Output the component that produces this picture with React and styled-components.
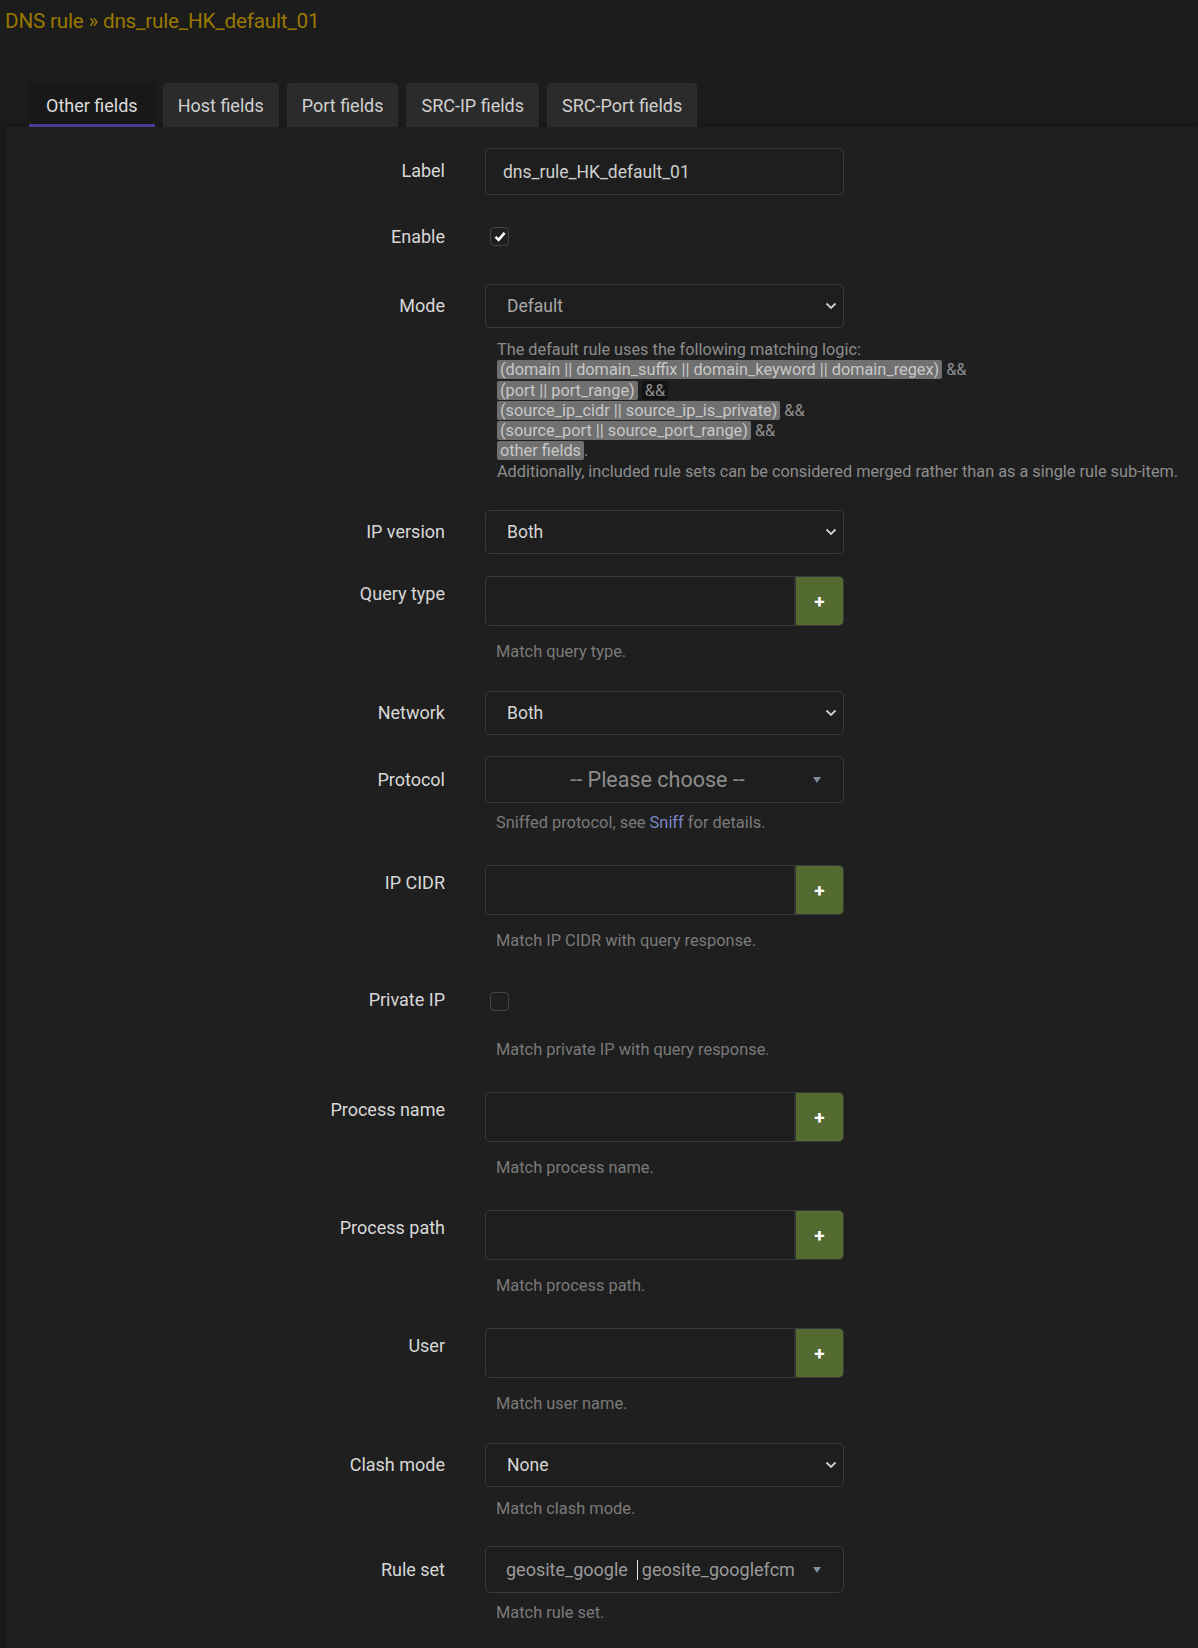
import React from 'react';
import styled, { createGlobalStyle } from 'styled-components';

const GlobalStyle = createGlobalStyle`
  html, body {
    margin: 0;
    background: #1c1c1c;
  }
  body {
    font-family: Roboto, "Noto Sans", "Liberation Sans", sans-serif;
    color: #cfcfcf;
  }
`;

const Page = styled.div`
  min-height: 1648px;
  overflow: hidden;
`;

const Title = styled.h2`
  margin: 0 0 49px;
  padding: 8px 0 0 5px;
  font-size: 20.7px;
  line-height: 26px;
  font-weight: 400;
  color: #9a7800;
  letter-spacing: -0.2px;
`;

const TabList = styled.ul`
  display: flex;
  gap: 8px;
  margin: 0 0 0 29px;
  padding: 0;
  list-style: none;
`;

const Tab = styled.li`
  height: 44px;
  box-sizing: border-box;
  padding: 3px ${(p) => (p.$active ? 17 : 15)}px 0;
  display: flex;
  align-items: center;
  font-size: 18px;
  color: ${(p) => (p.$active ? '#dcdcdc' : '#d0d0d0')};
  background: ${(p) => (p.$active ? '#181818' : '#2b2b2b')};
  border-radius: 4px 4px 0 0;
  border-bottom: 3px solid ${(p) => (p.$active ? '#4b3c92' : 'transparent')};
`;

const Panel = styled.div`
  margin-left: 5px;
  padding: 10px 0 40px;
  background: #1f1f1f;
  border-left: 1px solid #181818;
  box-shadow: 0 -3px 5px rgba(0, 0, 0, 0.18);
`;

const Row = styled.div`
  display: grid;
  grid-template-columns: 439px 1fr;
  column-gap: 40px;
  padding: ${(p) => p.$top ?? 11}px 0 11px;
`;

const Label = styled.div`
  text-align: right;
  font-size: 18px;
  line-height: ${(p) => p.$lh || 46}px;
  color: #d8d8d8;
`;

const Field = styled.div`
  display: flex;
  flex-direction: column;
  align-items: flex-start;
`;

const TextInput = styled.div`
  width: 359px;
  height: 47px;
  box-sizing: border-box;
  display: flex;
  align-items: center;
  padding: 0 17px;
  border: 1px solid #3a3a3a;
  border-radius: 5px;
  background: #1e1e1e;
  font-size: 17.5px;
  color: #cfcfcf;
`;

const Select = styled.div`
  width: 359px;
  height: 44px;
  box-sizing: border-box;
  display: flex;
  align-items: center;
  justify-content: space-between;
  padding: 0 6px 0 21px;
  border: 1px solid #3a3a3a;
  border-radius: 5px;
  background: #1e1e1e;
  font-size: 17.5px;
  color: ${(p) => (p.$dim ? '#a8a8a8' : '#d6d6d6')};
`;

const Chevron = () => (
  <svg width="12" height="8" viewBox="0 0 12 8">
    <path d="M1.5 1.5l4.5 4.5 4.5-4.5" fill="none" stroke="#d0d0d0" strokeWidth="1.8" />
  </svg>
);

const Combo = styled.div`
  width: 359px;
  height: 47px;
  box-sizing: border-box;
  display: flex;
  align-items: center;
  padding: 0 22px 0 20px;
  border: 1px solid #3a3a3a;
  border-radius: 5px;
  background: #1e1e1e;
  font-size: 18px;
  color: #9a9a9a;
`;

const Placeholder = styled.span`
  flex: 1;
  text-align: center;
  font-size: 21.5px;
  color: #8c8c8c;
  padding-right: 4px;
`;

const ComboItems = styled.span`
  flex: 1;
  display: flex;
  align-items: center;
  white-space: nowrap;
`;

const Caret = styled.span`
  flex: none;
  width: 0;
  height: 0;
  border-left: 4px solid transparent;
  border-right: 4px solid transparent;
  border-top: 6px solid #7d8ca0;
`;

const Cursor = styled.span`
  width: 1px;
  height: 20px;
  background: #e8e8e8;
  margin: 0 4px 0 9px;
`;

const DynList = styled.div`
  width: 359px;
  height: 50px;
  box-sizing: border-box;
  display: flex;
  border: 1px solid #3a3a3a;
  border-radius: 5px;
  overflow: hidden;
  background: #1e1e1e;
  margin-bottom: 6px;
`;

const Entry = styled.div`
  flex: 1;
`;

const AddButton = styled.div`
  width: 47px;
  display: flex;
  align-items: center;
  justify-content: center;
  background: #536a31;
  border-left: 2px solid #333;
  color: #fff;
  font-size: 19px;
  font-weight: 700;
`;

const CheckWrap = styled.div`
  height: ${(p) => p.$h || 45}px;
  display: flex;
  align-items: flex-start;
  box-sizing: border-box;
  padding: ${(p) => p.$pt || 12}px 0 0 5px;
`;

const CheckBox = styled.span`
  width: 19px;
  height: 19px;
  box-sizing: border-box;
  border: 1px solid #444;
  border-radius: 4px;
  display: flex;
  align-items: center;
  justify-content: center;
`;

const Help = styled.div`
  margin: ${(p) => p.$mt || 10}px 0 10px 11px;
  font-size: 16.4px;
  line-height: 20px;
  color: #7a7a7a;
  white-space: nowrap;
`;

const Link = styled.span`
  color: #7b86c4;
`;

const Desc = styled.div`
  margin: 12px 0 6px 12px;
  font-size: 16.3px;
  line-height: 20.3px;
  color: #8d8d8d;
  white-space: nowrap;
`;

const Code = styled.span`
  background: ${(p) => (p.$dark ? '#141414' : '#707070')};
  color: ${(p) => (p.$dark ? '#8d8d8d' : '#c8c8c8')};
  border-radius: 2px;
  padding: 0 3px;
`;

const Check = () => (
  <svg width="12" height="11" viewBox="0 0 12 11">
    <path d="M1.5 5.8l3.1 3.1 6-7" fill="none" stroke="#fff" strokeWidth="2.6" />
  </svg>
);

const DynRow = ({ label, help }) => (
  <Row>
    <Label $lh={36}>{label}</Label>
    <Field>
      <DynList>
        <Entry />
        <AddButton>+</AddButton>
      </DynList>
      <Help>{help}</Help>
    </Field>
  </Row>
);

const SelectRow = ({ label, value, help, top }) => (
  <Row $top={top}>
    <Label $lh={44}>{label}</Label>
    <Field>
      <Select>
        {value}
        <Chevron />
      </Select>
      {help && <Help $mt={12}>{help}</Help>}
    </Field>
  </Row>
);

export default function App() {
  return (
    <Page>
      <GlobalStyle />
      <Title>DNS rule » dns_rule_HK_default_01</Title>
      <TabList>
        <Tab $active>Other fields</Tab>
        <Tab>Host fields</Tab>
        <Tab>Port fields</Tab>
        <Tab>SRC-IP fields</Tab>
        <Tab>SRC-Port fields</Tab>
      </TabList>
      <Panel>
        <Row>
          <Label>Label</Label>
          <Field>
            <TextInput>dns_rule_HK_default_01</TextInput>
          </Field>
        </Row>
        <Row>
          <Label $lh={40}>Enable</Label>
          <Field>
            <CheckWrap $pt={10}>
              <CheckBox>
                <Check />
              </CheckBox>
            </CheckWrap>
          </Field>
        </Row>
        <Row>
          <Label $lh={44}>Mode</Label>
          <Field>
            <Select $dim>
              Default
              <Chevron />
            </Select>
            <Desc>
              The default rule uses the following matching logic:
              <br />
              <Code>(domain || domain_suffix || domain_keyword || domain_regex)</Code> &amp;&amp;
              <br />
              <Code>(port || port_range)</Code> <Code $dark>&amp;&amp;</Code>
              <br />
              <Code>(source_ip_cidr || source_ip_is_private)</Code> &amp;&amp;
              <br />
              <Code>(source_port || source_port_range)</Code> &amp;&amp;
              <br />
              <Code>other fields</Code>.
              <br />
              Additionally, included rule sets can be considered merged rather than as a single rule sub-item.
            </Desc>
          </Field>
        </Row>
        <SelectRow label="IP version" value="Both" />
        <DynRow label="Query type" help="Match query type." />
        <SelectRow label="Network" value="Both" top={8} />
        <Row $top={10}>
          <Label $lh={47}>Protocol</Label>
          <Field>
            <Combo>
              <Placeholder>-- Please choose --</Placeholder>
              <Caret />
            </Combo>
            <Help>
              Sniffed protocol, see <Link>Sniff</Link> for details.
            </Help>
          </Field>
        </Row>
        <DynRow label="IP CIDR" help="Match IP CIDR with query response." />
        <Row $top={8}>
          <Label $lh={40}>Private IP</Label>
          <Field>
            <CheckWrap $h={50}>
              <CheckBox />
            </CheckWrap>
            <Help>Match private IP with query response.</Help>
          </Field>
        </Row>
        <DynRow label="Process name" help="Match process name." />
        <DynRow label="Process path" help="Match process path." />
        <DynRow label="User" help="Match user name." />
        <SelectRow label="Clash mode" value="None" help="Match clash mode." top={8} />
        <Row $top={6}>
          <Label $lh={47}>Rule set</Label>
          <Field>
            <Combo>
              <ComboItems>
                geosite_google
                <Cursor />
                geosite_googlefcm
              </ComboItems>
              <Caret />
            </Combo>
            <Help>Match rule set.</Help>
          </Field>
        </Row>
      </Panel>
    </Page>
  );
}
